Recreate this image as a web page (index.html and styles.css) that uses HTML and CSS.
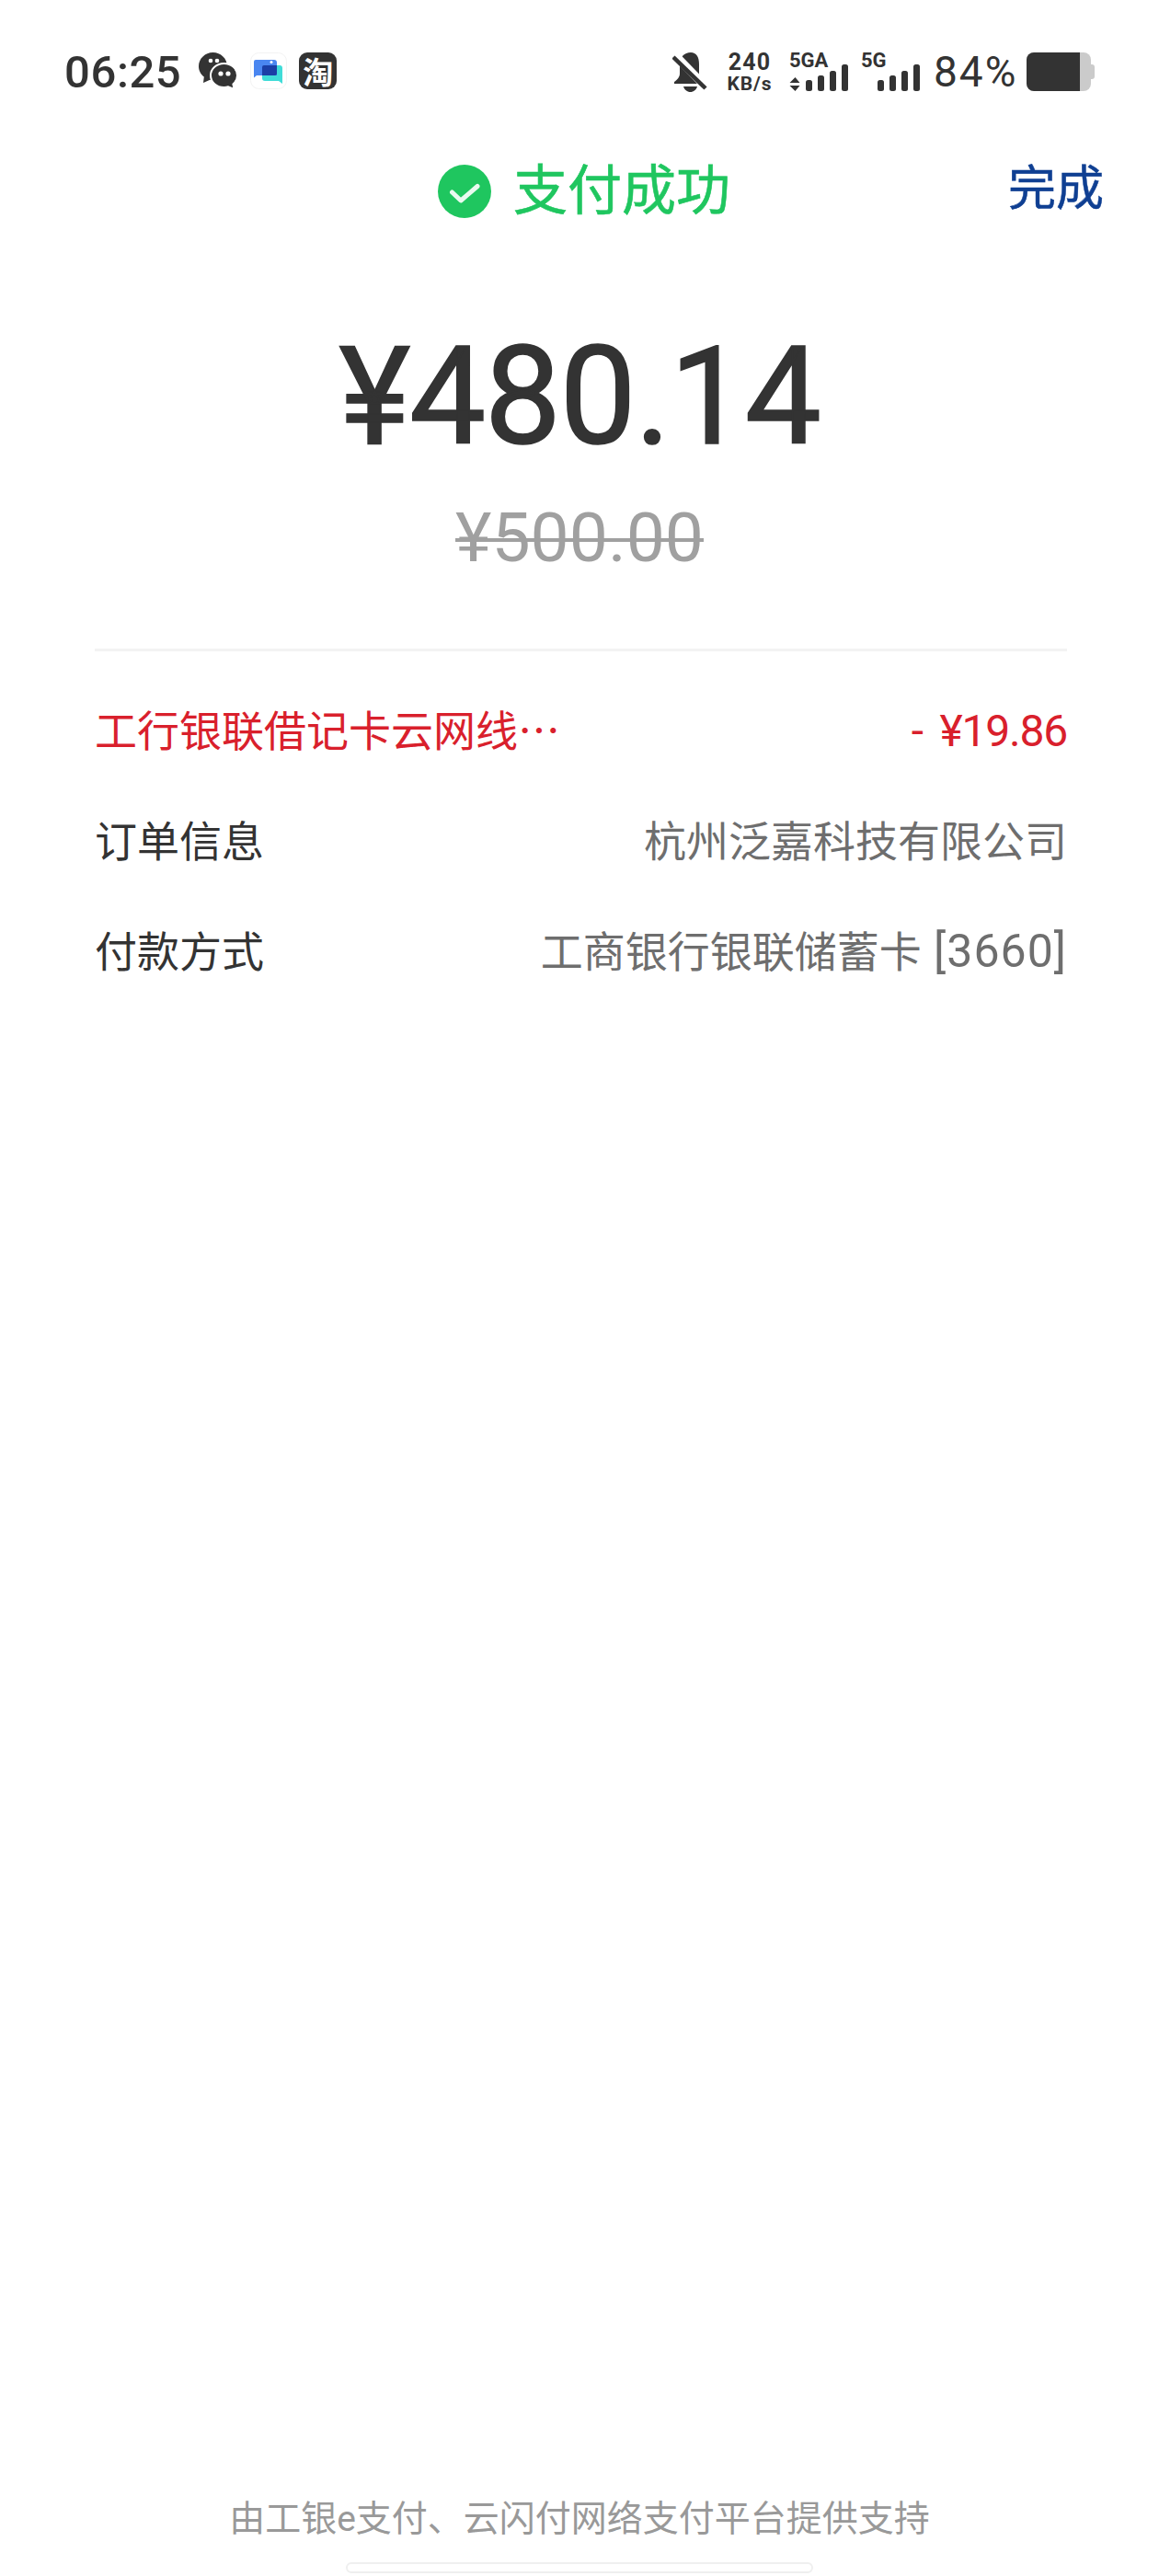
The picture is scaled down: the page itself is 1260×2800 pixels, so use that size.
FILE: index.html
```html
<html>
<head>
<meta charset="utf-8" />
<link rel="stylesheet" href="styles.css">
</head>
<body>
<div class="page">
    <div class="statusBar">
        <span class="time">06:25</span>
        <svg class="appIcon wechat" viewBox="0 0 41 40">
            <path d="M15.500 0C7 0 0 6.700 0 15c0 4.700 2.300 8.900 5.800 11.600L5 33l7.300-3.300c1 .2 2.100.3 3.200.3C24 30 31 23.300 31 15S24 0 15.500 0z" fill="#333"/>
            <path d="M27.500 12C19.500 12 13 17.800 13 25s6.500 13 14.500 13c1.600 0 3.200-.2 4.600-.7L38.500 40l-1.100-5.600C40.200 32 42 28.700 42 25c0-7.200-6.500-13-14.500-13z" fill="#333" stroke="#fff" stroke-width="2"/>
            <circle cx="13" cy="9" r="2.300" fill="#fff"/>
            <circle cx="20" cy="9" r="2.300" fill="#fff"/>
            <circle cx="24" cy="23" r="2.600" fill="#fff"/>
            <circle cx="32" cy="23" r="2.600" fill="#fff"/>
        </svg>
        <svg class="appIcon chatApp" viewBox="0 0 40 40">
            <rect x=".5" y=".5" width="39" height="39" rx="9" fill="#fff" stroke="#f3f3f3"/>
            <path d="M6 8h20a3 3 0 0 1 3 3v14H7l-3 2.500V10a2 2 0 0 1 2-2z" fill="#4a86f0"/>
            <path d="M15 14h17a3 3 0 0 1 3 3v17l-4-3H16a3 3 0 0 1-3-3v-3h16V14z" fill="#40dcd8"/>
            <path d="M15 14h14v9a2 2 0 0 1-2 2H13V16a2 2 0 0 1 2-2z" fill="#1b3fa6"/>
            <circle cx="23" cy="10.500" r="1.500" fill="#fff"/>
        </svg>
        <span class="taobao">淘</span>

        <div class="statusRight">
            <svg class="bell" viewBox="0 0 38 43">
                <path d="M20 0c-7 0-12 5-12 13v10c0 4-3 7-6 9v2h32v-2c-3-2-5-5-5-9V13C29 5 26 0 20 0z" fill="#333"/>
                <path d="M12 37h15c-1 3.500-4 6-7.500 6S13 40.500 12 37z" fill="#333"/>
                <path d="M3 3l34 35" stroke="#fff" stroke-width="9"/>
                <path d="M1 5l35 34" stroke="#333" stroke-width="4.500"/>
            </svg>
            <div class="speed">
                <span class="speedNum">240</span>
                <span class="speedUnit">KB/s</span>
            </div>
            <div class="net netFirst">
                <svg class="netBars" viewBox="0 0 64 42">
                    <path d="M6.500 14l5 6h-11zM6.500 29l5-6h-11z" fill="#333"/>
                    <rect x="18" y="17" width="7" height="12" rx="2.500" fill="#333"/>
                    <rect x="31" y="12" width="7" height="17" rx="2.500" fill="#333"/>
                    <rect x="44" y="7" width="7" height="22" rx="2.500" fill="#333"/>
                    <rect x="57" y="0" width="7" height="29" rx="2.500" fill="#333"/>
                </svg>
                <span class="netLabel">5GA</span>
            </div>
            <div class="net">
                <svg class="netBars" viewBox="0 0 64 42">
                    <rect x="18" y="17" width="7" height="12" rx="2.500" fill="#333"/>
                    <rect x="31" y="12" width="7" height="17" rx="2.500" fill="#333"/>
                    <rect x="44" y="7" width="7" height="22" rx="2.500" fill="#333"/>
                    <rect x="57" y="0" width="7" height="29" rx="2.500" fill="#333"/>
                </svg>
                <span class="netLabel">5G</span>
            </div>
            <span class="percent">84%</span>
            <div class="battery">
                <div class="batteryBody"><div class="batteryFill"></div></div>
                <div class="batteryNub"></div>
            </div>
        </div>
    </div>

    <div class="titleRow">
        <div class="title">
            <svg class="okIcon" viewBox="0 0 58 58">
                <circle cx="29" cy="29" r="29" fill="#1fc65f"/>
                <path d="M15.500 30l9.500 9 18-15.500" fill="none" stroke="#fff" stroke-width="5" stroke-linecap="round" stroke-linejoin="round" opacity=".9"/>
            </svg>
            <span>支付成功</span>
        </div>
        <a class="doneLink">完成</a>
    </div>

    <div class="amount">¥480.14</div>
    <div class="oldAmount">¥500.00</div>
    <div class="divider"></div>

    <div class="infoRow infoRed">
        <span>工行银联借记卡云网线…</span>
        <span class="infoNum">- ¥19.86</span>
    </div>
    <div class="infoRow">
        <span>订单信息</span>
        <span class="infoValue">杭州泛嘉科技有限公司</span>
    </div>
    <div class="infoRow">
        <span>付款方式</span>
        <span class="infoValue">工商银行银联储蓄卡 <span class="cardNo">[3660]</span></span>
    </div>

    <div class="footer">
        <div class="footerText">由工银e支付、云闪付网络支付平台提供支持</div>
        <div class="homeBar"></div>
    </div>
</div>
</body>
</html>
```

FILE: styles.css
```css
html {
    background-color: #FFF;
}
body {
    margin: 0;
    color: #333;
    font-family: Roboto, 'Noto Sans CJK SC', sans-serif;
}
.page {
    display: flex;
    flex-direction: column;
    height: 2800px;
    overflow: hidden;
}

/* status bar */
.statusBar {
    display: flex;
    align-items: flex-start;
    height: 43px;
    padding: 57px 70px 0 70px;
}
.time {
    font-size: 49px;
    font-weight: 500;
    line-height: 43px;
    letter-spacing: 0.6px;
    margin-right: 19px;
}
.appIcon {
    display: block;
    height: 40px;
}
.wechat {
    width: 41px;
    margin-right: 15px;
}
.chatApp {
    width: 40px;
    margin-right: 13px;
}
.taobao {
    width: 41px;
    height: 40px;
    background-color: #333;
    border-radius: 9px;
    color: #FFF;
    font: bold 33px/40px 'Noto Sans CJK SC', sans-serif;
    text-align: center;
}
.statusRight {
    display: flex;
    align-items: flex-start;
    margin-left: auto;
}
.bell {
    width: 38px;
    height: 43px;
    margin-right: 20px;
}
.speed {
    display: flex;
    flex-direction: column;
    align-items: center;
    width: 52px;
    margin-right: 17px;
}
.speedNum {
    font-size: 25px;
    font-weight: 700;
    line-height: 22px;
    letter-spacing: 1.2px;
}
.speedUnit {
    font-size: 21px;
    font-weight: 700;
    line-height: 20px;
    letter-spacing: 0.9px;
    margin-top: 2px;
}
.net {
    display: grid;
    width: 64px;
    height: 42px;
    margin-right: 14px;
}
.netBars, .netLabel {
    grid-area: 1 / 1;
}
.netBars {
    width: 64px;
    height: 42px;
    margin-top: 13px;
}
.netLabel {
    font-size: 22px;
    font-weight: 700;
    line-height: 18px;
}
.net + .net {
    margin-right: 15px;
}
.percent {
    font-size: 46px;
    line-height: 43px;
    letter-spacing: 2px;
    width: 89px;
    margin-right: 12px;
    white-space: nowrap;
}
.battery {
    display: flex;
    align-items: center;
    height: 42px;
}
.batteryBody {
    width: 70px;
    height: 42px;
    background-color: #CBCBCB;
    border-radius: 8px;
    overflow: hidden;
}
.batteryFill {
    width: 58px;
    height: 42px;
    background-color: #333;
}
.batteryNub {
    width: 4px;
    height: 16px;
    background-color: #CBCBCB;
    border-radius: 0 3px 3px 0;
}

/* title */
.titleRow {
    display: grid;
    grid-template-columns: 1fr auto 1fr;
    align-items: center;
    height: 72px;
    margin-top: 72px;
    padding-right: 60px;
    padding-left: 60px;
}
.title {
    grid-column: 2;
    display: flex;
    align-items: center;
    gap: 24px;
    padding-left: 10px;
    color: #1FC65F;
    font-size: 59px;
    line-height: 72px;
    -webkit-text-stroke: 0.6px #1FC65F;
}
.okIcon {
    display: block;
    width: 58px;
    height: 58px;
}
.doneLink {
    grid-column: 3;
    justify-self: end;
    color: #0F3F92;
    font-size: 52px;
    line-height: 72px;
    -webkit-text-stroke: 0.5px #0F3F92;
    position: relative;
    top: -2px;
}

/* amounts */
.amount {
    margin-top: 108px;
    font-size: 148px;
    line-height: 160px;
    letter-spacing: -1.4px;
    -webkit-text-stroke: 1.6px #333;
    text-align: center;
}
.oldAmount {
    margin-top: 27px;
    color: #A0A0A0;
    font-size: 75px;
    line-height: 90px;
    text-align: center;
    text-decoration: line-through;
    text-decoration-thickness: 4px;
}
.divider {
    height: 3px;
    margin: 76px 100px 0 103px;
    background-color: #F3F3F3;
}

/* rows */
.infoRow {
    display: flex;
    align-items: baseline;
    justify-content: space-between;
    box-sizing: border-box;
    height: 120px;
    padding: 26px 100px 0 103px;
    font-family: 'Noto Sans CJK SC', sans-serif;
    font-size: 46px;
    line-height: 60px;
}
.divider + .infoRow {
    margin-top: 27px;
}
.infoRed {
    color: #D9202C;
}
.infoNum {
    font-family: Roboto, sans-serif;
    font-size: 48px;
    letter-spacing: -1.2px;
    word-spacing: 8px;
}
.infoValue {
    color: #6E6E6E;
    word-spacing: 3px;
}
.cardNo {
    font-family: Roboto, sans-serif;
    font-size: 50px;
    letter-spacing: 1px;
}

/* footer */
.footer {
    margin-top: auto;
    padding-bottom: 3px;
}
.footerText {
    color: #999;
    font-size: 39px;
    line-height: 50px;
    text-align: center;
}
.homeBar {
    box-sizing: border-box;
    width: 508px;
    height: 12px;
    margin: 22px auto 0;
    background-color: #FFF;
    border: 2px solid #EFEFEF;
    border-radius: 6px;
}
```
